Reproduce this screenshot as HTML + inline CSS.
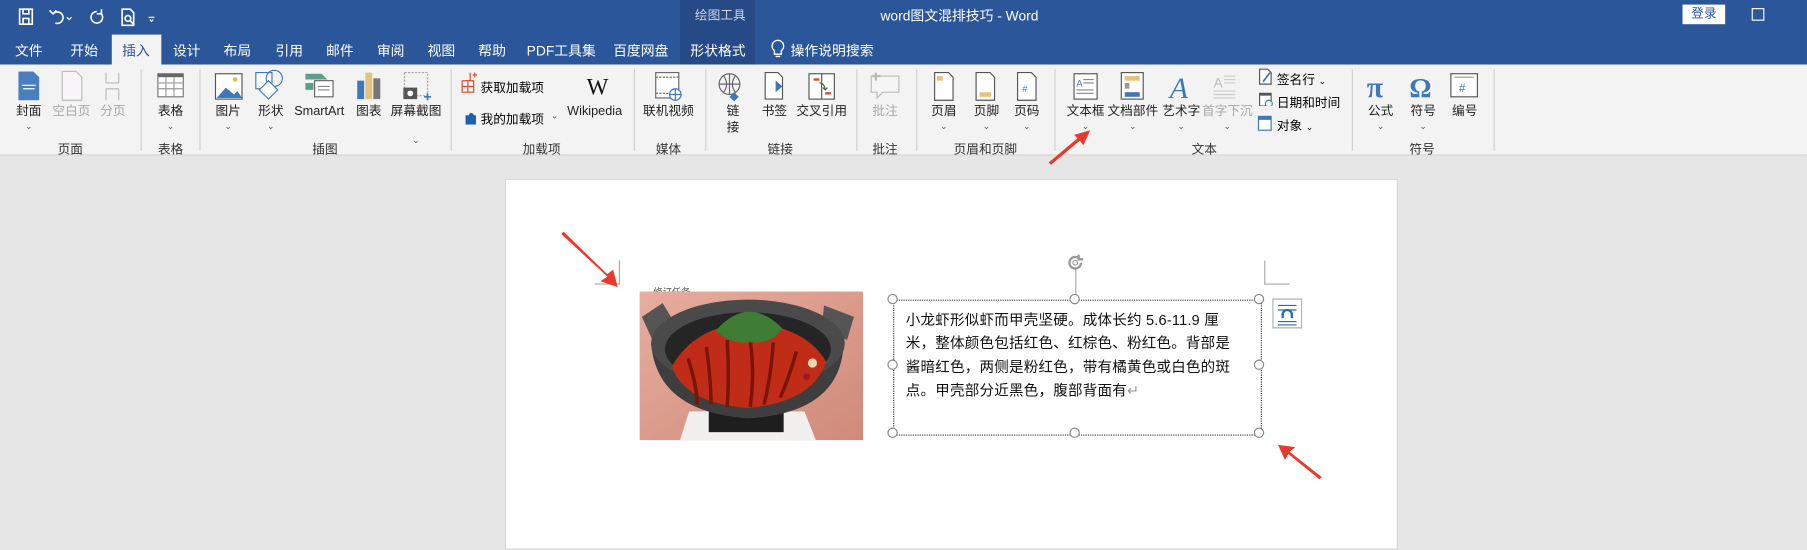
<!DOCTYPE html>
<html><head><meta charset="utf-8"><style>
html,body{margin:0;padding:0;width:1807px;height:538px;overflow:hidden;background:#e6e6e6}
#s{position:absolute;left:0;top:0;width:1568px;height:467px;transform:scale(1.15242);transform-origin:0 0;font-family:"Liberation Sans","Noto Sans CJK SC",sans-serif;background:#e6e6e6}
.a{position:absolute}
.t{position:absolute;color:#fff;font-size:12px;top:35px;transform:translateX(-50%);white-space:nowrap}
.l{position:absolute;font-size:11px;color:#222;transform:translateX(-50%);white-space:nowrap;top:90px;text-align:center;line-height:14px}
.g{position:absolute;font-size:11px;color:#333;transform:translateX(-50%);top:121px;white-space:nowrap}
.sep{position:absolute;top:60px;width:1px;height:71px;background:#d0d0d0}
.dim{color:#a8a8a8}
.v{position:absolute;font-size:8px;color:#555;top:105px;transform:translateX(-50%)}
.h{position:absolute;width:7px;height:7px;border:1px solid #888;border-radius:50%;background:#fff}
.tx{position:absolute;left:786px;font-size:12.6px;color:#111;white-space:nowrap;letter-spacing:0.2px}
</style></head><body><div id="s">
<div class="a" style="left:0;top:0;width:1568px;height:56px;background:#2b579a"></div>
<div class="a" style="left:590px;top:0;width:65px;height:56px;background:#254a85"></div>
<div class="a" style="left:603px;top:5px;font-size:11px;color:#c9d4e6">绘图工具</div>
<div class="a" style="left:764px;top:5px;font-size:12px;color:#fff">word图文混排技巧 - Word</div>
<div class="a" style="left:1460px;top:4px;width:37px;height:17px;background:#fff;color:#2b579a;font-size:11px;text-align:center;line-height:17px">登录</div>
<div class="a" style="left:1520px;top:7px;width:9px;height:9px;border:1px solid #fff"></div>
<svg class="a" style="left:12px;top:6px" width="130" height="18" viewBox="0 0 130 18" fill="none" stroke="#fff" stroke-width="1.4">
<rect x="5" y="2" width="11" height="13"/><rect x="8" y="2" width="5" height="4"/><rect x="8" y="10" width="5" height="5"/>
<path d="M34 6 A5 5 0 1 1 36 14 M31 3 L34 6 L37 3"/><path d="M46 9 l2 2 l2-2" stroke-width="1"/>
<path d="M72 4 A5 5 0 1 0 76 6 M76 2 v4 h-4"/>
<path d="M94 2 h7 l3 3 v11 h-10 z"/><circle cx="99" cy="10" r="2.5"/><path d="M101 12 l3 3"/>
<path d="M117 9 h5 M118 11 l1.5 1.5 l1.5-1.5" stroke-width="1"/>
</svg>
<div class="a" style="left:97px;top:30px;width:43px;height:27px;background:#f3f3f3"></div>
<div class="t" style="left:25px">文件</div><div class="t" style="left:73px">开始</div>
<div class="t" style="left:118px;color:#2b579a">插入</div><div class="t" style="left:162px">设计</div>
<div class="t" style="left:206px">布局</div><div class="t" style="left:251px">引用</div>
<div class="t" style="left:295px">邮件</div><div class="t" style="left:339px">审阅</div>
<div class="t" style="left:383px">视图</div><div class="t" style="left:427px">帮助</div>
<div class="t" style="left:487px">PDF工具集</div><div class="t" style="left:556px">百度网盘</div>
<div class="t" style="left:623px">形状格式</div>
<svg class="a" style="left:668px;top:34px" width="14" height="17" fill="none" stroke="#fff" stroke-width="1.2"><path d="M7 1 a5 5 0 0 0-3 9 v3 h6 v-3 a5 5 0 0 0-3-9 M5 15 h4"/></svg>
<div class="t" style="left:722px">操作说明搜索</div>
<div class="a" style="left:0;top:56px;width:1568px;height:78px;background:#f3f3f3;border-bottom:1px solid #d6d6d6"></div>
<svg class="a" style="left:0;top:56px" width="1320" height="36" viewBox="0 56 1320 36">
<path d="M16 62 h13 l5 5 v20 h-18z" fill="#4a7fbf"/><path d="M19 74 h12 M20 77 h10" stroke="#fff"/>
<path d="M54 62 h12 l5 5 v20 h-17z" fill="#f7f5f7" stroke="#bbb"/>
<path d="M92 63 v9 M103 63 v9 M92 77 v10 M103 77 v10 M92 72 h11 M92 77 h11" stroke="#bbb" fill="none"/>
<rect x="137" y="64" width="22" height="20" fill="#fff" stroke="#777"/><rect x="137" y="64" width="22" height="3" fill="#666"/>
<path d="M137 72 h22 M137 77 h22 M144 67 v17 M151 67 v17" stroke="#999"/>
<rect x="187" y="64" width="23" height="22" fill="#fff" stroke="#555"/><path d="M188 85 l8-9 l7 6 l3-3 l4 6z" fill="#3d78b8"/><circle cx="204" cy="69" r="2" fill="#e8b65a"/>
<rect x="222" y="63" width="14" height="14" fill="#fff" stroke="#3d78b8"/><circle cx="238" cy="68" r="7" fill="none" stroke="#3d78b8"/><path d="M233 70 l8 8 l-8 8 l-8-8z" fill="#fff" stroke="#3d78b8"/>
<path d="M265 64 h14 l5 5 h-19z" fill="#5b9e8a"/><path d="M265 72 h7 v6 h-7z" fill="#5b9e8a"/><rect x="273" y="70" width="16" height="14" fill="#fff" stroke="#666"/><path d="M276 75 h10 M276 78 h10" stroke="#888"/>
<rect x="310" y="70" width="6" height="16" fill="#3d78b8"/><rect x="317" y="63" width="6" height="23" fill="#e8c27a"/><rect x="324" y="68" width="6" height="18" fill="#777"/>
<rect x="351" y="63" width="20" height="20" fill="none" stroke="#aaa" stroke-dasharray="2 1"/><rect x="350" y="76" width="12" height="10" fill="#555"/><circle cx="356" cy="81" r="2.5" fill="#fff"/><path d="M368 84 h6 M371 81 v6" stroke="#3d78b8" stroke-width="1.5"/>
<path d="M401 70 h7 v-7 M401 70 v10 h10 v-10 h-10 M406 70 v10 M401 75 h10 M410 65 h4 M412 63 v4" stroke="#d8452a" fill="none"/>
<text x="509" y="82" font-family="Liberation Serif" font-size="20" fill="#111">W</text>
<rect x="569" y="63" width="20" height="22" fill="#fff" stroke="#666"/><path d="M569 67 h20 M569 81 h20" stroke="#666" stroke-dasharray="2 1"/><circle cx="586" cy="82" r="5" fill="#fff" stroke="#3d78b8"/><path d="M581 82 h10 M586 77 v10" stroke="#3d78b8"/>
<circle cx="633" cy="73" r="9" fill="none" stroke="#666"/><path d="M624 73 h18 M633 64 v18 M628 66 q5 7 0 14 M638 66 q-5 7 0 14" stroke="#666" fill="none"/><path d="M633 84 l4-4 l4 4 l-4 4z" fill="#3d78b8"/>
<path d="M664 63 h11 l4 4 v19 h-15z" fill="#fff" stroke="#555"/><path d="M673 70 l6 5 l-6 5z" fill="#3d78b8"/>
<rect x="702" y="64" width="22" height="22" fill="#fff" stroke="#555"/><path d="M713 64 v22" stroke="#555"/><rect x="706" y="68" width="5" height="2" fill="#d8452a"/><rect x="716" y="80" width="5" height="2" fill="#d8452a"/><path d="M711 72 q4 0 5 5 m-2-1 l2 2 l2-2" stroke="#555" fill="none"/>
<path d="M756 66 h24 v14 h-14 l-5 5 v-5 h-5z" fill="#f5f5f5" stroke="#bbb"/><path d="M760 63 v7 M757 66 h7" stroke="#bbb" stroke-width="2"/>
<path d="M811 63 h12 l4 4 v20 h-16z" fill="#fff" stroke="#555"/><rect x="813" y="66" width="5" height="4" fill="#e8c27a"/>
<path d="M847 63 h12 l4 4 v20 h-16z" fill="#fff" stroke="#555"/><rect x="850" y="80" width="10" height="4" fill="#e8c27a"/>
<path d="M883 63 h12 l4 4 v20 h-16z" fill="#fff" stroke="#555"/><text x="887" y="80" font-size="8" fill="#3d78b8">#</text>
<rect x="932" y="64" width="20" height="22" fill="#fff" stroke="#555"/><text x="934" y="75" font-size="8" fill="#3d78b8">A</text><path d="M940 69 h9 M940 72 h9 M934 78 h15 M934 81 h15" stroke="#888"/>
<rect x="973" y="63" width="19" height="23" fill="#fff" stroke="#555"/><rect x="976" y="66" width="13" height="4" fill="#e8c27a"/><rect x="976" y="72" width="4" height="5" fill="#999"/><rect x="976" y="80" width="13" height="4" fill="#3d78b8"/>
<text x="1015" y="85" font-family="Liberation Serif" font-style="italic" font-size="26" fill="#3d78b8">A</text>
<text x="1053" y="76" font-size="12" fill="#bbb">A</text><path d="M1062 66 h10 M1062 69 h10 M1062 72 h10 M1053 79 h19 M1053 82 h19 M1053 85 h19" stroke="#ccc"/>
<path d="M1093 60 h7 l3 3 v10 h-10z" fill="#fff" stroke="#555"/><path d="M1096 71 l6-8" stroke="#3d78b8" stroke-width="1.5"/>
<rect x="1093" y="81" width="10" height="11" fill="#fff" stroke="#555"/><rect x="1093" y="81" width="10" height="2" fill="#555"/><circle cx="1101" cy="90" r="3" fill="#fff" stroke="#3d78b8"/>
<text x="1186" y="84" font-family="Liberation Serif" font-size="26" font-weight="bold" fill="#3d78b8">π</text>
<text x="1223" y="84" font-family="Liberation Serif" font-size="24" font-weight="bold" fill="#3d78b8">Ω</text>
<rect x="1259" y="64" width="23" height="20" fill="#fff" stroke="#555"/><path d="M1262 67 h17" stroke="#999"/><text x="1266" y="80" font-size="10" fill="#3d78b8">#</text>
</svg>
<svg class="a" style="left:1091px;top:100px" width="14" height="14"><rect x="1" y="1" width="11" height="12" fill="#fff" stroke="#3d78b8"/><rect x="1" y="1" width="11" height="3" fill="#3d78b8"/></svg>
<svg class="a" style="left:402px;top:95px" width="12" height="14"><path d="M2 5 h3 a2 2 0 0 1 4 0 h2 v8 h-9z" fill="#1f5fae"/></svg>

<div class="l" style="left:25px">封面</div><div class="l dim" style="left:62px">空白页</div><div class="l dim" style="left:98px">分页</div>
<div class="l" style="left:148px">表格</div><div class="l" style="left:198px">图片</div><div class="l" style="left:235px">形状</div>
<div class="l" style="left:277px">SmartArt</div><div class="l" style="left:320px">图表</div><div class="l" style="left:361px">屏幕截图</div>
<div class="a" style="left:417px;top:68px;font-size:11px">获取加载项</div>
<div class="a" style="left:417px;top:95px;font-size:11px">我的加载项</div><div class="a" style="left:478px;top:96px;font-size:8px;color:#555">⌄</div>
<div class="l" style="left:516px">Wikipedia</div>
<div class="l" style="left:580px">联机视频</div>
<div class="l" style="left:636px">链<br>接</div><div class="l" style="left:672px">书签</div><div class="l" style="left:713px">交叉引用</div>
<div class="l dim" style="left:768px">批注</div>
<div class="l" style="left:819px">页眉</div><div class="l" style="left:856px">页脚</div><div class="l" style="left:891px">页码</div>
<div class="l" style="left:942px">文本框</div><div class="l" style="left:983px">文档部件</div><div class="l" style="left:1025px">艺术字</div><div class="l dim" style="left:1065px">首字下沉</div>
<div class="a" style="left:1108px;top:61px;font-size:11px">签名行 <span style="font-size:8px">⌄</span></div>
<div class="a" style="left:1108px;top:81px;font-size:11px">日期和时间</div>
<div class="a" style="left:1108px;top:101px;font-size:11px">对象 <span style="font-size:8px">⌄</span></div>
<div class="l" style="left:1198px">公式</div><div class="l" style="left:1235px">符号</div><div class="l" style="left:1271px">编号</div>
<div class="v" style="left:25px">⌄</div><div class="v" style="left:148px">⌄</div><div class="v" style="left:198px">⌄</div><div class="v" style="left:235px">⌄</div><div class="v" style="left:361px;top:117px">⌄</div>
<div class="v" style="left:819px">⌄</div><div class="v" style="left:856px">⌄</div><div class="v" style="left:891px">⌄</div>
<div class="v" style="left:942px">⌄</div><div class="v" style="left:983px">⌄</div><div class="v" style="left:1025px">⌄</div><div class="v" style="left:1065px">⌄</div>
<div class="v" style="left:1198px">⌄</div><div class="v" style="left:1235px">⌄</div>
<div class="sep" style="left:122px"></div><div class="sep" style="left:173px"></div><div class="sep" style="left:391px"></div><div class="sep" style="left:550px"></div>
<div class="sep" style="left:612px"></div><div class="sep" style="left:743px"></div><div class="sep" style="left:795px"></div><div class="sep" style="left:915px"></div>
<div class="sep" style="left:1173px"></div><div class="sep" style="left:1296px"></div>
<div class="g" style="left:61px">页面</div><div class="g" style="left:148px">表格</div><div class="g" style="left:282px">插图</div><div class="g" style="left:470px">加载项</div>
<div class="g" style="left:580px">媒体</div><div class="g" style="left:677px">链接</div><div class="g" style="left:768px">批注</div><div class="g" style="left:855px">页眉和页脚</div>
<div class="g" style="left:1045px">文本</div><div class="g" style="left:1234px">符号</div>
<div class="a" style="left:438px;top:155px;width:773px;height:320px;background:#fff;border:1px solid #d4d4d4"></div>
<div class="a" style="left:537px;top:226px;width:1px;height:21px;background:#aaa"></div><div class="a" style="left:516px;top:246px;width:22px;height:1px;background:#aaa"></div>
<div class="a" style="left:1097px;top:226px;width:1px;height:21px;background:#aaa"></div><div class="a" style="left:1097px;top:246px;width:22px;height:1px;background:#aaa"></div>
<svg class="a" style="left:555px;top:253px" width="194" height="129" viewBox="0 0 194 129">
<defs><linearGradient id="bg" x1="0" y1="0" x2="1" y2="1"><stop offset="0" stop-color="#e6ad9d"/><stop offset="1" stop-color="#d08a7a"/></linearGradient></defs>
<rect width="194" height="129" fill="url(#bg)"/>
<path d="M35 129 l8-25 h100 l10 25z" fill="#f2f0ee"/><rect x="60" y="100" width="65" height="22" fill="#1e1e1e"/>
<path d="M2 22 l18-12 l12 20 l-20 14z" fill="#555"/><path d="M160 12 l26 10 l-6 20 l-22-10z" fill="#555"/>
<path d="M10 45 q5 60 85 65 q80-5 82-65z" fill="#3e3e3e"/>
<ellipse cx="94" cy="45" rx="84" ry="38" fill="#4a4a4a"/>
<ellipse cx="94" cy="50" rx="72" ry="32" fill="#252525"/>
<path d="M28 65 q20-35 66-38 q50 3 68 34 q-12 35-68 40 q-55-4-66-36z" fill="#c02c18"/>
<path d="M42 58 q8 25 8 40 M58 48 q4 30 4 50 M76 42 q2 30 0 58 M96 42 q4 30 0 58 M116 44 q-2 30 -8 54 M136 52 q-6 22 -14 40" stroke="#7a1408" stroke-width="3" fill="none"/>
<path d="M66 34 q28-32 58 -2 q-10 14-28 12 q-18 2-30-10z" fill="#3f7d35"/><circle cx="150" cy="62" r="4" fill="#e8d8b0"/><circle cx="145" cy="74" r="3" fill="#a01c18"/>
</svg>
<div class="a" style="left:567px;top:248px;font-size:8px;color:#555;overflow:hidden;height:5px">修订任务</div>
<div class="a" style="left:775px;top:260px;width:318px;height:116px;border:1px dotted #333"></div>
<div class="a" style="left:933px;top:232px;width:1px;height:28px;background:#aaa"></div>
<svg class="a" style="left:925px;top:220px" width="18" height="16"><path d="M13 8 a5 5 0 1 1-2-4 M11 1 v4 h4" fill="none" stroke="#999" stroke-width="2"/><circle cx="8" cy="8" r="2" fill="none" stroke="#999"/></svg>
<div class="h" style="left:770px;top:255px"></div><div class="h" style="left:928px;top:255px"></div><div class="h" style="left:1088px;top:255px"></div>
<div class="h" style="left:770px;top:312px"></div><div class="h" style="left:1088px;top:312px"></div>
<div class="h" style="left:770px;top:371px"></div><div class="h" style="left:928px;top:371px"></div><div class="h" style="left:1088px;top:371px"></div>
<div class="tx" style="top:267px">小龙虾形似虾而甲壳坚硬。成体长约 5.6-11.9 厘</div>
<div class="tx" style="top:287px">米，整体颜色包括红色、红棕色、粉红色。背部是</div>
<div class="tx" style="top:308px">酱暗红色，两侧是粉红色，带有橘黄色或白色的斑</div>
<div class="tx" style="top:328px">点。甲壳部分近黑色，腹部背面有<span style="color:#999">↵</span></div>
<svg class="a" style="left:1104px;top:259px" width="26" height="26"><rect x="0.5" y="0.5" width="25" height="25" fill="#fff" stroke="#aaa"/><path d="M5 6 h16 M5 10 h16 M5 20 h16 M5 23 h16" stroke="#2b6cb0"/><path d="M9 17 v-3 a4 4 0 0 1 8 0 v3" stroke="#2b6cb0" fill="none" stroke-width="2"/></svg>
<svg class="a" style="left:0;top:0" width="1568" height="467">
<g fill="#e8392b"><path d="M487 203 L527 240 L521 244 L536 249 L532 234 L527 238 L489 201z"/>
<path d="M1147 414 L1119 392 L1124 388 L1109 386 L1115 399 L1118 394 L1145 416z"/>
<path d="M912 143 L937 122 L940 126 L946 113 L932 117 L935 120 L910 141z"/></g>
</svg>
</div></body></html>
